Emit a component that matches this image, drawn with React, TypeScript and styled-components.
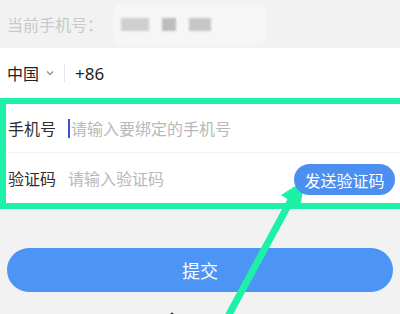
import React from "react";
import styled, { createGlobalStyle } from "styled-components";

const GlobalStyle = createGlobalStyle`
  html, body {
    margin: 0;
    padding: 0;
    background: #f2f2f2;
    font-family: "Noto Sans CJK SC", "Noto Sans", sans-serif;
  }
`;

const Page = styled.div`
  position: relative;
  width: 400px;
  height: 314px;
  overflow: hidden;
  background: #f2f2f2;
`;

const CurrentBar = styled.div`
  height: 48px;
  display: flex;
  align-items: center;
  padding-left: 7px;
  color: #c9c9c9;
  font-size: 16px;
`;

const Masked = styled.div`
  display: flex;
  align-items: center;
  gap: 13px;
  margin-left: 10px;
  padding: 14px 55px 14px 8px;
  background: #f6f6f6;
  border-radius: 8px;
  filter: blur(0.6px);
`;

const Blot = styled.span<{ $w: number; $tone: string }>`
  display: block;
  width: ${(p) => p.$w}px;
  height: 13px;
  background: ${(p) => p.$tone};
  filter: blur(0.8px);
`;

const CountryRow = styled.div`
  height: 50px;
  background: #fff;
  display: flex;
  align-items: center;
  padding-left: 7px;
  font-size: 16px;
  color: #222;
`;

const Chevron = styled.svg`
  margin-left: 7px;
  margin-right: 10px;
`;

const Divider = styled.span`
  width: 1px;
  height: 18px;
  background: #e6e6e6;
  margin-right: 10px;
`;

const Code = styled.span`
  font-family: "Noto Sans", "Liberation Sans", sans-serif;
  font-size: 17px;
`;

const Highlight = styled.div`
  background: #fff;
  border-style: solid;
  border-color: #1df0a7;
  border-width: 6px 0 6px 6px;
`;

const FieldRow = styled.div<{ $h: number; $line?: boolean }>`
  height: ${(p) => p.$h}px;
  display: flex;
  align-items: center;
  padding-left: 2px;
  font-size: 16px;
  border-bottom: ${(p) => (p.$line ? "1px solid #f3f3f3" : "none")};
`;

const Label = styled.span`
  width: 60px;
  color: #2e2e2e;
`;

const Caret = styled.span`
  width: 2px;
  height: 19px;
  background: #3e4fcf;
  margin-right: 1px;
`;

const Placeholder = styled.span`
  color: #b8b8b8;
  flex: 1;
`;

const SendButton = styled.button`
  position: relative;
  z-index: 2;
  height: 31px;
  width: 101px;
  margin-right: 5px;
  margin-top: 3px;
  border: none;
  border-radius: 16px;
  background: #4b8ff1;
  color: #fff;
  font-family: inherit;
  font-size: 16px;
  padding: 0;
`;

const Footer = styled.div`
  padding: 39px 7px 0;
`;

const Submit = styled.button`
  display: block;
  width: 100%;
  height: 44px;
  border: none;
  border-radius: 22px;
  background: #4d95f5;
  color: #fff;
  font-family: inherit;
  font-size: 18px;
`;

const Overlay = styled.svg`
  position: absolute;
  left: 0;
  top: 0;
  z-index: 1;
  pointer-events: none;
`;

export default function App() {
  return (
    <>
      <GlobalStyle />
      <Page>
        <CurrentBar>
          当前手机号：
          <Masked>
            <Blot $w={28} $tone="#d0cece" />
            <Blot $w={14} $tone="#bdbdbd" />
            <Blot $w={22} $tone="#c6c6c6" />
          </Masked>
        </CurrentBar>
        <CountryRow>
          中国
          <Chevron width="8" height="6" viewBox="0 0 8 6">
            <path d="M1 1.5 L4 4.5 L7 1.5" fill="none" stroke="#888" strokeWidth="1.2" />
          </Chevron>
          <Divider />
          <Code>+86</Code>
        </CountryRow>
        <Highlight>
          <FieldRow $h={48} $line>
            <Label>手机号</Label>
            <Caret />
            <Placeholder>请输入要绑定的手机号</Placeholder>
          </FieldRow>
          <FieldRow $h={50}>
            <Label>验证码</Label>
            <Placeholder>请输入验证码</Placeholder>
            <SendButton>发送验证码</SendButton>
          </FieldRow>
        </Highlight>
        <Footer>
          <Submit>提交</Submit>
        </Footer>
        <Overlay width="400" height="314" viewBox="0 0 400 314">
          <line x1="226" y1="320" x2="291" y2="200" stroke="#1df0a7" strokeWidth="7" />
          <polygon points="305,180 281,195 300,207" fill="#1df0a7" />
          <circle cx="172" cy="314" r="1.5" fill="#333" />
        </Overlay>
      </Page>
    </>
  );
}
